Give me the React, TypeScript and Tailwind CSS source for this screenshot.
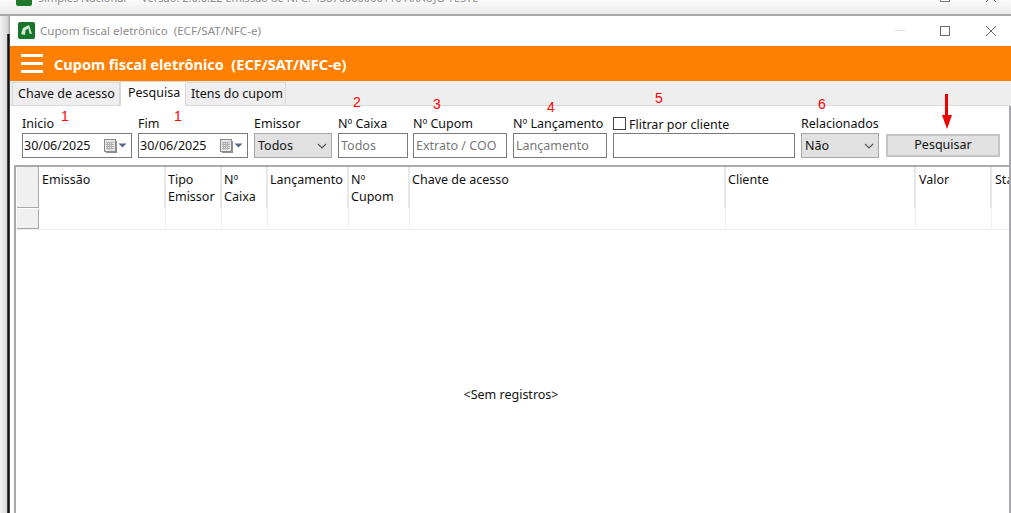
const font = "font-['Noto_Sans','Open_Sans',sans-serif]";
const note = "absolute text-[#ff0000] font-['Liberation_Sans',sans-serif] text-[14px] leading-[16px]";

function CalendarIcon() {
  return (
    <svg width="24" height="14" viewBox="0 0 24 14" className="shrink-0">
      <rect x="2" y="2" width="11" height="12" fill="#8f8f8f" />
      <rect x="0.5" y="0.5" width="11" height="12" fill="#e6e6e6" stroke="#8a8a8a" />
      <path d="M2 3.500h8M2 5.500h8M2 7.500h8M2 9.500h8M3.500 3v7.500M5.500 3v7.500M7.500 3v7.500" stroke="#b0b0b0" strokeWidth="1" />
      <path d="M14.500 4.500h8l-4 4z" fill="#56688a" />
    </svg>
  );
}

function DateField({ label, noteLeft }: { label: string; noteLeft: string }) {
  return (
    <div className="relative w-[110px]">
      <div className="h-[19px] leading-[19px] text-[#111]">{label}</div>
      <div className="flex items-center justify-between h-[25px] border border-[#7a7a7a] pl-[1px] pr-[3px] bg-white text-[#111]">
        <span className="pt-px">30/06/2025</span>
        <CalendarIcon />
      </div>
      <span className={`${note} ${noteLeft} top-[-6px]`}>1</span>
    </div>
  );
}

function SelectField({ label, value, width }: { label: string; value: string; width: string }) {
  return (
    <div className={width}>
      <div className="h-[19px] leading-[19px] text-[#111]">{label}</div>
      <div className="flex items-center justify-between h-[25px] border border-[#a8a8a8] bg-[#e1e1e1] pl-[3px] pr-[3px] text-[#111]">
        <span className="pt-px">{value}</span>
        <svg width="12" height="8" viewBox="0 0 12 8"><path d="M2 2 6 6l4-4" fill="none" stroke="#555" strokeWidth="1.100" /></svg>
      </div>
    </div>
  );
}

function TextField({ label, placeholder, width }: { label: string; placeholder: string; width: string }) {
  return (
    <div className={width}>
      <div className="h-[19px] leading-[19px] text-[#111] whitespace-nowrap">{label}</div>
      <div className="flex items-center h-[25px] border border-[#7a7a7a] bg-white pl-[2px] pt-px text-[#777] whitespace-nowrap">{placeholder}</div>
    </div>
  );
}

const columns = [
  { label: ["Emissão"], width: "w-[127px] pl-[3px]" },
  { label: ["Tipo", "Emissor"], width: "w-[56px] pl-[2px]" },
  { label: ["Nº", "Caixa"], width: "w-[46px] pl-[2px]" },
  { label: ["Lançamento"], width: "w-[81px] pl-[2px]" },
  { label: ["Nº", "Cupom"], width: "w-[61px] pl-[2px]" },
  { label: ["Chave de acesso"], width: "w-[316px] pl-[2px]" },
  { label: ["Cliente"], width: "w-[190px] pl-[2px]" },
  { label: ["Valor"], width: "w-[76px] pl-[3px]" },
  { label: ["Status"], width: "w-[30px] pl-[3px]" },
];

export default function App() {
  return (
    <div className={`${font} relative w-[1011px] h-[513px] overflow-hidden bg-white text-[12.5px] flex flex-col`}>
      <div className="h-[16px] shrink-0 bg-gradient-to-b from-[#fbfbfb] to-[#e9e9e9] overflow-hidden relative border-b-2 border-[#a8a8a8]">
        <svg width="16" height="16" viewBox="0 0 16 16" className="absolute left-[16px] top-[-10px]"><rect width="16" height="16" rx="2" fill="#1f7a2e" /></svg>
        <span className="absolute left-[38px] top-[-10px] whitespace-pre text-[#8c8c8c] text-[11px]">Simples Nacional  -  Versão: 2.0.0.22 Emissão de NFC: 43876000000110 ARAUJO TESTE</span>
        <div className="absolute left-[940px] top-[-8px] w-[10px] h-[10px] border border-[#777]" />
        <svg width="12" height="12" viewBox="0 0 12 12" className="absolute left-[985px] top-[-9px]"><path d="M1 1l10 10M11 1 1 11" stroke="#777" strokeWidth="1" /></svg>
      </div>
      <div className="flex-1 flex min-h-0">
        <div className="w-[7px] shrink-0 bg-gradient-to-r from-[#f2f2f2] to-[#d8d8d8]" />
        <div className="w-[3px] shrink-0 flex flex-col">
          <div className="h-[18px] bg-gradient-to-r from-[#e0e0e0] to-[#a0a0a0]" />
          <div className="flex-1 bg-gradient-to-r from-[#555] via-[#111] to-[#555]" />
        </div>
        <div className="flex-1 min-w-0 flex flex-col bg-white">
          <div className="h-[30px] shrink-0 flex items-center bg-white pb-[1px]">
            <svg width="17" height="17" viewBox="0 0 17 17" className="ml-[8px]">
              <rect width="17" height="17" rx="2" fill="#17752b" />
              <path d="M3 12 5 6l6-3 3 9-2.500-.5-1-5-3 1.500L7 13z" fill="#d5ead5" />
            </svg>
            <span className="ml-[5px] text-[#8b8b8b] whitespace-pre text-[11.6px]">Cupom fiscal eletrônico  (ECF/SAT/NFC-e)</span>
            <div className="ml-auto flex items-center">
              <div className="w-[10px] h-px bg-[#e2e2e2] mr-[35px]" />
              <div className="w-[10px] h-[10px] border border-[#6a6a6a] mr-[35px]" />
              <svg width="12" height="12" viewBox="0 0 12 12" className="mr-[14px]"><path d="M1 1l10 10M11 1 1 11" stroke="#6a6a6a" strokeWidth="1" /></svg>
            </div>
          </div>
          <div className="h-[35px] shrink-0 bg-[#ff8000] flex items-center">
            <div className="ml-[11px] w-[22px] flex flex-col gap-[5px]">
              <div className="h-[3px] bg-white" />
              <div className="h-[3px] bg-white" />
              <div className="h-[3px] bg-white" />
            </div>
            <span className="ml-[11px] pt-[2px] text-white font-bold text-[14.500px] whitespace-pre">Cupom fiscal eletrônico  (ECF/SAT/NFC-e)</span>
          </div>
          <div className="h-[25px] shrink-0 bg-[#eeeeee] border-b border-[#d9d9d9] flex items-end pl-[2px] text-[#111]">
            <div className="h-[23px] w-[108px] pl-[5px] border border-b-0 border-[#d9d9d9] flex items-center whitespace-nowrap">Chave de acesso</div>
            <div className="h-[25px] mb-[-1px] w-[66px] pl-[7px] bg-white border border-b-0 border-[#d9d9d9] flex items-center pb-[2px] whitespace-nowrap">Pesquisa</div>
            <div className="h-[23px] w-[100px] pl-[5px] border border-l-0 border-b-0 border-[#d9d9d9] flex items-center whitespace-nowrap">Itens do cupom</div>
          </div>
          <div className="flex-1 min-h-0 flex flex-col pl-[4px] border-r-2 border-[#a9a9ad]">
            <div className="h-[59px] shrink-0 flex pl-[8px] pt-[8px] gap-[6px]">
              <DateField label="Inicio" noteLeft="left-[39px]" />
              <DateField label="Fim" noteLeft="left-[36px]" />
              <SelectField label="Emissor" value="Todos" width="w-[78px]" />
              <TextField label="Nº Caixa" placeholder="Todos" width="w-[70px] mr-[-1px]" />
              <TextField label="Nº Cupom" placeholder="Extrato / COO" width="w-[94px]" />
              <TextField label="Nº Lançamento" placeholder="Lançamento" width="w-[94px]" />
              <div className="w-[182px]">
                <div className="h-[19px] flex items-center gap-[3px] text-[#111]">
                  <span className="w-[13px] h-[13px] border border-[#444] bg-white" />
                  <span className="pt-[3px]">Flitrar por cliente</span>
                </div>
                <div className="h-[25px] border border-[#7a7a7a] bg-white" />
              </div>
              <SelectField label="Relacionados" value="Não" width="w-[78px]" />
              <button className="ml-[1px] self-end mb-[8px] w-[114px] h-[23px] border-2 border-[#c4c4c4] bg-[#e1e1e1] text-[#111]">Pesquisar</button>
            </div>
            <div className="flex-1 min-h-0 border-t-2 border-l-2 border-[#a9a9ad] relative overflow-hidden">
              <div className="flex h-[41px]">
                <div className="w-[22px] shrink-0 bg-[#f0f0f0] border-r border-b border-[#a8a8a8] ml-[1px]" />
                {columns.map((c) => (
                  <div key={c.label[0]} className={`${c.width} shrink-0 border-r-2 border-[#e8e8e8] pt-[4px] leading-[17px] text-[#111] overflow-hidden whitespace-nowrap`}>
                    {c.label.map((l) => <div key={l}>{l}</div>)}
                  </div>
                ))}
              </div>
              <div className="flex h-[22px] border-b border-[#ececec]">
                <div className="w-[23px] shrink-0">
                  <div className="w-[22px] h-[20px] mt-[1px] ml-[1px] bg-[#f0f0f0] border-r border-b border-[#a8a8a8]" />
                </div>
                {columns.map((c) => (
                  <div key={c.label[0]} className={`${c.width} shrink-0 border-r border-[#efefef] mb-px`} />
                ))}
              </div>
              <div className="absolute left-0 right-[3px] top-[219px] text-center text-[#111]">&lt;Sem registros&gt;</div>
            </div>
          </div>
        </div>
      </div>
      <div className={`${note} left-[353px] top-[94px]`}>2</div>
      <div className={`${note} left-[433px] top-[96px]`}>3</div>
      <div className={`${note} left-[547px] top-[99px]`}>4</div>
      <div className={`${note} left-[655px] top-[90px]`}>5</div>
      <div className={`${note} left-[818px] top-[96px]`}>6</div>
      <svg width="10" height="36" viewBox="0 0 10 36" className="absolute left-[942px] top-[94px]">
        <path d="M4.500 0v24" stroke="#f00000" strokeWidth="3" />
        <path d="M0 21h10L5 35z" fill="#f00000" />
      </svg>
    </div>
  );
}
